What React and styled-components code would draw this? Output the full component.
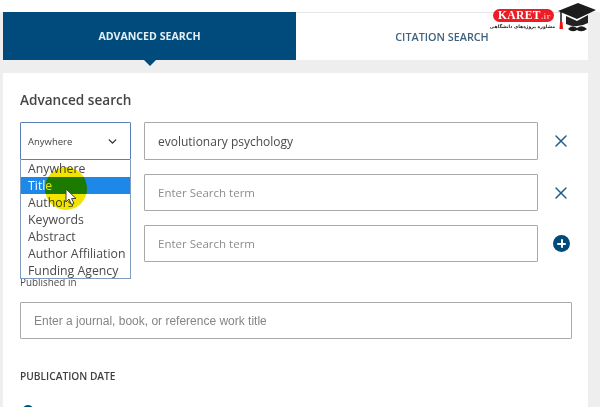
import React from "react";
import styled, { createGlobalStyle } from "styled-components";
import { ChevronDown, X } from "lucide-react";

const Global = createGlobalStyle`
  html, body { margin: 0; padding: 0; background: #fff; }
  #root { width: 600px; height: 407px; overflow: hidden; }
`;
const Page = styled.div`
  position: relative; width: 600px; height: 407px; overflow: hidden;
  background: #fff; padding-top: 12px; box-sizing: border-box;
  font-family: "Open Sans", sans-serif; color: #3d3d3d;
`;
const Stage = styled.div`
  height: 395px; background: #eeeeee; padding-left: 3px; padding-right: 12px;
  display: flex; flex-direction: column;
`;
const Tabs = styled.div`display: grid; grid-template-columns: 293px 292px; height: 48px; flex: none;`;
const Tab = styled.div`
  position: relative; display: flex; align-items: center; justify-content: center;
  font-size: 10.6px; font-weight: 700;
  background: ${p => (p.$active ? "#004b7c" : "#fff")};
  color: ${p => (p.$active ? "#e4eef5" : "#40627c")};
  ${p => !p.$active && "border-top: 1px solid #e6e6e6; box-sizing: border-box; font-size: 10.8px; font-weight: 600;"}
  ${p => p.$active && `&::after {
    content: ""; position: absolute; left: 141px; bottom: -6px; width: 0; height: 0;
    border-left: 6px solid transparent; border-right: 6px solid transparent; border-top: 6px solid #004b7c;
  }`}
`;
const Panel = styled.div`
  margin-top: 13px; flex: 1; background: #fff; padding: 18px 16px 0 17px;
  position: relative;
`;
const Heading = styled.h2`
  margin: 0 0 13px; font-size: 13.6px; line-height: 18px; font-weight: 600; color: #454545;
`;
const Rows = styled.div`display: flex; flex-direction: column; gap: 14px;`;
const Row = styled.div`
  display: grid; grid-template-columns: 111px 394px 47px; column-gap: 13px; height: 38px;
  &:nth-child(2), &:nth-child(3) { height: 37px; }
`;
const SelectWrap = styled.div`position: relative;`;
const SelectBox = styled.div`
  height: 38px; box-sizing: border-box; border: 1px solid #5b7fb4; border-radius: 1px;
  display: flex; align-items: center; justify-content: space-between;
  padding: 0 11px 0 7px; font-size: 9.5px; color: #444; background: #fff;
`;
const Options = styled.ul`
  position: absolute; z-index: 2; top: 38px; left: 0; width: 111px; height: 119px; margin: 0; padding: 0;
  box-sizing: border-box; list-style: none; background: #fff; border: 1px solid #7f9cbf; border-top: 0;
`;
const Option = styled.li`
  height: 17px; line-height: 17px; padding-left: 7px; font-size: 12.3px; white-space: nowrap;
  color: ${p => (p.$on ? "#fff" : "#4a4a4a")};
  background: ${p => (p.$on ? "#1e88e8" : "transparent")};
`;
const Field = styled.div`
  box-sizing: border-box; height: 100%; border: 1px solid #a9a9a9; border-radius: 1px;
  display: flex; align-items: center; padding-left: ${p => p.$pad || 13}px;
  font-size: ${p => p.$size || 11.5}px; color: ${p => p.$color || "#8d8d8d"}; background: #fff;
  font-family: ${p => p.$sans ? '"Liberation Sans", sans-serif' : "inherit"};
`;
const Action = styled.div`
  display: flex; align-items: center; color: #1f5c86;
`;
const Plus = styled.div`
  margin-left: 2px; width: 17px; height: 17px; border-radius: 50%; background: #004b7c; position: relative;
  &::before, &::after { content: ""; position: absolute; background: #fff; border-radius: 1px; }
  &::before { left: 4px; top: 7.5px; width: 9px; height: 2px; }
  &::after { left: 7.5px; top: 4px; width: 2px; height: 9px; }
`;
const Label = styled.div`
  margin-top: 14px; font-size: 9.9px; line-height: 13px; color: #4c4c4c;
`;
const Journal = styled.div`margin-top: 13px; width: 552px; height: 37px;`;
const SectionTitle = styled.div`
  margin-top: 31px; font-size: 10.2px; line-height: 13px; font-weight: 600; color: #3f3f3f;
`;
const Radio = styled.div`
  margin-top: 22px; margin-left: 2px; width: 12px; height: 12px; border-radius: 50%; background: #004b7c;
`;
const Spot = styled.div`
  position: absolute; z-index: 3; left: 45px; top: 167px; width: 42px; height: 43px; border-radius: 50%;
  background: #f0e400; mix-blend-mode: multiply;
`;
const Cursor = styled.svg`position: absolute; z-index: 4; left: 65px; top: 188px;`;
const Logo = styled.div`
  position: absolute; z-index: 5; left: 492px; top: 2px; width: 106px; height: 32px; background: transparent;
`;
const Badge = styled.div`
  position: absolute; left: 1px; top: 7px; width: 61px; height: 13px; border-radius: 7px; background: #ee1c25;
  color: #fff; font-family: "Liberation Serif", serif; font-weight: 700; font-size: 11.5px; line-height: 13px;
  padding-left: 5px; box-sizing: border-box; letter-spacing: .4px; white-space: nowrap;
  span { color: #f5a3a3; font-size: 9px; }
`;
const Tagline = styled.div`
  position: absolute; left: 0; top: 21px; width: 63px; text-align: center;
  font-family: "DejaVu Sans", sans-serif; font-size: 4.6px; line-height: 7px; color: #222; white-space: nowrap;
  direction: rtl; font-weight: 700;
`;
const Cap = styled.svg`position: absolute; left: 65px; top: 0;`;

const opts = ["Anywhere", "Title", "Authors", "Keywords", "Abstract", "Author Affiliation", "Funding Agency"];

export default function App() {
  return (
    <Page>
      <Global />
      <Stage>
        <Tabs>
          <Tab $active>ADVANCED SEARCH</Tab>
          <Tab>CITATION SEARCH</Tab>
        </Tabs>
        <Panel>
          <Heading>Advanced search</Heading>
          <Rows>
            <Row>
              <SelectWrap>
                <SelectBox>Anywhere<ChevronDown size={13} strokeWidth={2.6} color="#333" /></SelectBox>
                <Options>
                  {opts.map(o => <Option key={o} $on={o === "Title"}>{o}</Option>)}
                </Options>
              </SelectWrap>
              <Field $color="#4a4a4a" $size={12}>evolutionary psychology</Field>
              <Action><X size={20} strokeWidth={1.7} /></Action>
            </Row>
            <Row>
              <div />
              <Field>Enter Search term</Field>
              <Action><X size={20} strokeWidth={1.7} /></Action>
            </Row>
            <Row>
              <div />
              <Field>Enter Search term</Field>
              <Action><Plus /></Action>
            </Row>
          </Rows>
          <Label>Published in</Label>
          <Journal>
            <Field $sans $size={12} $color="#858585">Enter a journal, book, or reference work title</Field>
          </Journal>
          <SectionTitle>PUBLICATION DATE</SectionTitle>
          <Radio />
        </Panel>
      </Stage>
      <Spot />
      <Cursor width="13" height="18" viewBox="0 0 13 18">
        <path d="M1 1 L1 14 L4 11 L6.5 16.5 L9 15.5 L6.5 10.5 L11 10.5 Z" fill="#fff" stroke="#444" strokeWidth="1" />
      </Cursor>
      <Logo>
        <Badge>KARET<span>.ir</span></Badge>
        <Tagline>مشاوره پروژه‌های دانشگاهی</Tagline>
        <Cap width="40" height="32" viewBox="0 0 40 32">
          <path d="M1 9 L21 1 L39 8 L20 17 Z" fill="#1c1c1c" />
          <path d="M9 14 L9 22 Q20 27 31 21 L31 13 L20 19 Z" fill="#222" />
          <path d="M4 10 L4 20" stroke="#222" strokeWidth="1.6" />
          <path d="M3 20 L5.5 20 L6 27 L2.5 27 Z" fill="#e11" />
          <path d="M11 27 Q15 22 20 26 Q25 22 30 27 Q25 31 20 28 Q15 31 11 27 Z" fill="#1c1c1c" />
        </Cap>
      </Logo>
    </Page>
  );
}
